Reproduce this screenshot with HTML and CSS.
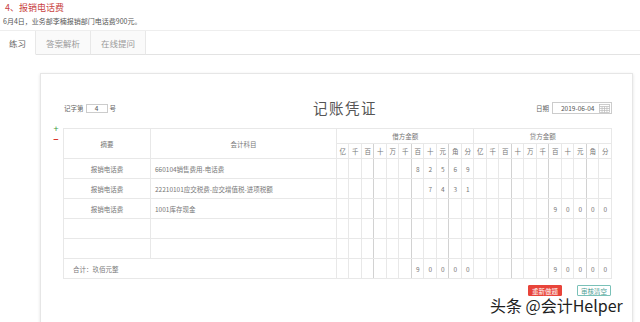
FILE: index.html
```html
<!DOCTYPE html>
<html lang="zh-CN">
<head>
  <meta charset="UTF-8">
  <title>报销电话费</title>
  <link rel="stylesheet" href="styles.css">
</head>
<body>
  <div class="question">
    <h1 class="q-title">4、报销电话费</h1>
    <p class="q-desc">6月4日，业务部李楠报销部门电话费900元。</p>
  </div>

  <div class="tabs">
    <div class="tab active">练习</div>
    <div class="tab">答案解析</div>
    <div class="tab">在线提问</div>
    <div class="tab-rest"></div>
  </div>

  <div class="voucher">
    <div class="voucher-head">
      <div class="voucher-no">
        <span>记字第</span>
        <span class="no-input">4</span>
        <span>号</span>
      </div>
      <div class="voucher-title">记账凭证</div>
      <div class="voucher-date">
        <span>日期</span>
        <span class="date-input">
          2019-06-04
          <svg class="cal-icon" viewBox="0 0 12 10" fill="none" stroke="#bbb" stroke-width="0.8">
            <rect x="0.5" y="0.5" width="11" height="9"></rect>
            <line x1="0.5" y1="2.8" x2="11.5" y2="2.8"></line>
            <line x1="3.3" y1="2.8" x2="3.3" y2="9.5"></line>
            <line x1="6" y1="2.8" x2="6" y2="9.5"></line>
            <line x1="8.7" y1="2.8" x2="8.7" y2="9.5"></line>
            <line x1="0.5" y1="5" x2="11.5" y2="5"></line>
            <line x1="0.5" y1="7.2" x2="11.5" y2="7.2"></line>
          </svg>
        </span>
      </div>
    </div>

    <div class="voucher-body">
      <div class="row-ops">
        <span class="op-add">+</span>
        <span class="op-del">−</span>
      </div>
      <table class="entries">
        <colgroup>
          <col class="c-summary">
          <col class="c-account">
          <col span="22" class="c-digit">
        </colgroup>
        <thead>
          <tr>
            <th rowspan="2">摘要</th>
            <th rowspan="2">会计科目</th>
            <th colspan="11" class="sep">借方金额</th>
            <th colspan="11" class="sep">贷方金额</th>
          </tr>
          <tr class="units">
            <th class="sep">亿</th><th>千</th><th class="mark">百</th><th>十</th><th>万</th><th class="mark">千</th><th>百</th><th>十</th><th class="mark">元</th><th>角</th><th>分</th>
            <th class="sep">亿</th><th>千</th><th class="mark">百</th><th>十</th><th>万</th><th class="mark">千</th><th>百</th><th>十</th><th class="mark">元</th><th>角</th><th>分</th>
          </tr>
        </thead>
        <tbody>
          <tr>
            <td class="summary">报销电话费</td>
            <td class="account">660104销售费用-电话费</td>
            <td class="sep"></td><td></td><td class="mark"></td><td></td><td></td><td class="mark"></td><td>8</td><td>2</td><td class="mark">5</td><td>6</td><td>9</td>
            <td class="sep"></td><td></td><td class="mark"></td><td></td><td></td><td class="mark"></td><td></td><td></td><td class="mark"></td><td></td><td></td>
          </tr>
          <tr>
            <td class="summary">报销电话费</td>
            <td class="account">22210101应交税费-应交增值税-进项税额</td>
            <td class="sep"></td><td></td><td class="mark"></td><td></td><td></td><td class="mark"></td><td></td><td>7</td><td class="mark">4</td><td>3</td><td>1</td>
            <td class="sep"></td><td></td><td class="mark"></td><td></td><td></td><td class="mark"></td><td></td><td></td><td class="mark"></td><td></td><td></td>
          </tr>
          <tr>
            <td class="summary">报销电话费</td>
            <td class="account">1001库存现金</td>
            <td class="sep"></td><td></td><td class="mark"></td><td></td><td></td><td class="mark"></td><td></td><td></td><td class="mark"></td><td></td><td></td>
            <td class="sep"></td><td></td><td class="mark"></td><td></td><td></td><td class="mark"></td><td>9</td><td>0</td><td class="mark">0</td><td>0</td><td>0</td>
          </tr>
          <tr>
            <td class="summary"></td>
            <td class="account"></td>
            <td class="sep"></td><td></td><td class="mark"></td><td></td><td></td><td class="mark"></td><td></td><td></td><td class="mark"></td><td></td><td></td>
            <td class="sep"></td><td></td><td class="mark"></td><td></td><td></td><td class="mark"></td><td></td><td></td><td class="mark"></td><td></td><td></td>
          </tr>
          <tr>
            <td class="summary"></td>
            <td class="account"></td>
            <td class="sep"></td><td></td><td class="mark"></td><td></td><td></td><td class="mark"></td><td></td><td></td><td class="mark"></td><td></td><td></td>
            <td class="sep"></td><td></td><td class="mark"></td><td></td><td></td><td class="mark"></td><td></td><td></td><td class="mark"></td><td></td><td></td>
          </tr>
          <tr class="total">
            <td colspan="2" class="total-text">合计：玖佰元整</td>
            <td class="sep"></td><td></td><td class="mark"></td><td></td><td></td><td class="mark"></td><td>9</td><td>0</td><td class="mark">0</td><td>0</td><td>0</td>
            <td class="sep"></td><td></td><td class="mark"></td><td></td><td></td><td class="mark"></td><td>9</td><td>0</td><td class="mark">0</td><td>0</td><td>0</td>
          </tr>
        </tbody>
      </table>
    </div>

    <div class="actions">
      <button class="btn btn-redo">重新做题</button>
      <button class="btn btn-clear">审核清空</button>
    </div>
  </div>

  <div class="watermark">头条 @会计Helper</div>
</body>
</html>
```

FILE: styles.css
```css
* {
  margin: 0;
  padding: 0;
  box-sizing: border-box;
}

body {
  font-family: "Noto Sans CJK SC", "Liberation Sans", sans-serif;
  background: #fff;
  color: #666;
  width: 640px;
  height: 322px;
  overflow: hidden;
  position: relative;
}

.question {
  padding: 2px 0 0 3px;
}

.q-title {
  font-size: 9px;
  font-weight: normal;
  line-height: 12px;
  color: #c9433f;
  padding-left: 2px;
}

.q-desc {
  font-size: 7px;
  line-height: 10px;
  color: #555;
  margin-top: 2px;
}

.tabs {
  display: flex;
  margin-top: 4px;
  border-top: 1px solid #eee;
  height: 25px;
}

.tab {
  font-size: 8.5px;
  color: #999;
  padding: 0 10px;
  line-height: 24px;
  border-bottom: 1px solid #e3e3e3;
  border-right: 1px solid #e8e8e8;
  background: #fafafa;
}

.tab.active {
  color: #666;
  background: #fff;
  border-bottom-color: #fff;
  width: 36px;
  padding: 0 0 0 9px;
}

.tab-rest {
  flex: 1;
  border-bottom: 1px solid #e3e3e3;
}

.voucher {
  margin: 18px 0 0 40px;
  width: 593px;
  height: 252px;
  border: 1px solid #e6e6e6;
  box-shadow: 0 1px 3px rgba(0, 0, 0, 0.12);
  padding: 27px 20px 0 12px;
}

.voucher-head {
  display: grid;
  grid-template-columns: 1fr auto 1fr;
  align-items: center;
  height: 14px;
  padding-left: 11px;
}

.voucher-no {
  display: flex;
  align-items: center;
  gap: 2px;
  font-size: 6.5px;
  color: #666;
}

.no-input {
  width: 22px;
  height: 9px;
  border: 1px solid #ccc;
  font-size: 6.5px;
  line-height: 7px;
  text-align: center;
  color: #555;
}

.voucher-title {
  font-size: 14.5px;
  line-height: 14px;
  letter-spacing: 1.5px;
  color: #555;
  padding-left: 14px;
}

.voucher-date {
  display: flex;
  align-items: center;
  justify-content: flex-end;
  gap: 3px;
  font-size: 6.5px;
  color: #666;
}

.date-input {
  display: flex;
  align-items: center;
  justify-content: space-between;
  width: 60px;
  height: 12px;
  border: 1px solid #ccc;
  padding: 0 1px 0 8px;
  font-size: 6.5px;
  color: #555;
}

.cal-icon {
  width: 11px;
  height: 9px;
}

.voucher-body {
  display: flex;
  margin-top: 13px;
}

.row-ops {
  width: 13px;
  display: flex;
  flex-direction: column;
  align-items: center;
  padding: 0 4px 0 0;
  line-height: 7px;
  font-size: 9px;
}

.op-add {
  color: #3a9a3a;
  margin-top: -3px;
}

.op-del {
  color: #d9342b;
  margin-top: 4px;
  font-weight: bold;
}

.entries {
  border-collapse: collapse;
  table-layout: fixed;
  width: 548px;
  font-size: 6.5px;
  color: #777;
}

.c-summary { width: 87px; }
.c-account { width: 186px; }
.c-digit { width: 12.5px; }

.entries th,
.entries td {
  border: 1px solid #e8e8e8;
  font-weight: normal;
  text-align: center;
  padding: 0;
  overflow: hidden;
  white-space: nowrap;
}

.entries thead th {
  height: 15px;
}

.entries tbody td {
  height: 20px;
}

.entries td.account {
  text-align: left;
  padding-left: 4px;
}

.entries .mark {
  border-right-color: #d2d2d2;
}

.entries .sep {
  border-left-color: #d2d2d2;
}

.entries td.total-text {
  text-align: left;
  padding-left: 9px;
}

.actions {
  display: flex;
  justify-content: flex-end;
  gap: 15px;
  margin-top: 6px;
  padding-right: 1px;
}

.btn {
  display: inline-flex;
  align-items: center;
  font-family: inherit;
  font-size: 6.5px;
  height: 11px;
  padding: 0 3px;
  border: 1px solid;
  border-radius: 1px;
}

.btn-redo {
  background: #e8443a;
  border-color: #e8443a;
  color: #fff;
}

.btn-clear {
  background: #fff;
  border-color: #7ac1b8;
  color: #4f9e94;
}

.watermark {
  position: absolute;
  left: 490px;
  top: 297px;
  font-size: 16px;
  line-height: 17px;
  color: #1e1e1e;
  text-shadow: 0 0 2px #fff, 0 0 2px #fff;
  white-space: nowrap;
}
```
